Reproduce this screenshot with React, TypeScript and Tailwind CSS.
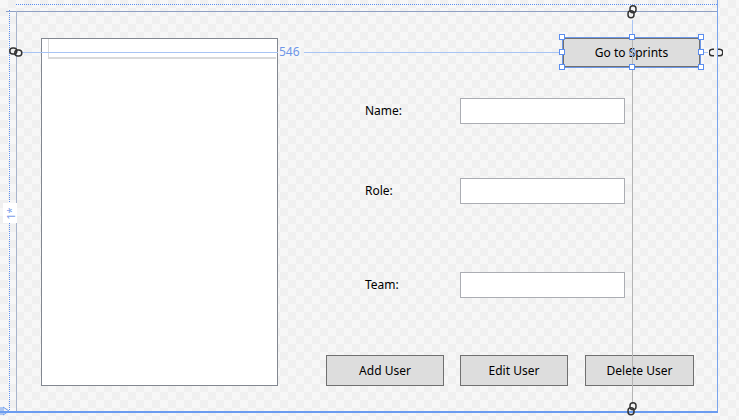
import React from "react";

const font = { fontFamily: '"Noto Sans", "Open Sans", sans-serif' };

const Handle = ({ x, y }: { x: number; y: number }) => (
  <div
    className="absolute h-[6px] w-[6px] border border-[#5b8ef0] bg-white"
    style={{ left: x - 3, top: y - 3 }}
  />
);

const Chain = ({ vertical }: { vertical?: boolean }) => (
  <svg width="14" height="10" viewBox="0 0 14 10" className={vertical ? "rotate-90" : ""}>
    <rect x="0.8" y="1" width="7" height="6" rx="3" fill="none" stroke="#333" strokeWidth="1.5" />
    <rect x="5.8" y="3" width="7" height="6" rx="3" fill="none" stroke="#333" strokeWidth="1.5" />
  </svg>
);

const Field = ({ label, className }: { label: string; className: string }) => (
  <div className={`ml-[87px] flex items-center ${className}`}>
    <span className="w-[95px] text-[12px] text-black">{label}</span>
    <div className="h-[26px] w-[165px] border border-[#abadb3] bg-white" />
  </div>
);

const Btn = ({ label, w }: { label: string; w: string }) => (
  <button
    className={`h-[31px] ${w} border border-[#707070] bg-[#dddddd] text-[12px] text-black`}
  >
    {label}
  </button>
);

export default function App() {
  return (
    <div
      className="relative h-[420px] w-[739px] overflow-hidden bg-[conic-gradient(#f0f0f0_25%,#f7f7f7_0_50%,#f0f0f0_0_75%,#f7f7f7_0)] bg-[length:16px_16px]"
      style={font}
    >
      {/* designer frame */}
      <div className="absolute left-[16px] top-[4px] w-[701px] border-t border-dotted border-[#5b8ef0]" />
      <div className="absolute left-[9px] top-[10px] h-[400px] border-l border-dotted border-[#5b8ef0]" />
      <div className="absolute left-[6px] top-[11px] w-[712px] border-t border-[#8fa0c4]" />
      <div className="absolute left-[16px] top-[11px] h-[400px] border-l border-[#a8b4cc]" />
      <div className="absolute left-[717px] top-0 h-[412px] border-l border-[#7aa4ec]" />
      <div className="absolute left-0 top-[411px] w-[718px] border-t-2 border-[#6a9cf0]" />

      {/* content */}
      <div className="flex pl-[41px] pt-[38px]">
        <div className="relative h-[348px] w-[237px] border border-[#828790] bg-white">
          <div className="absolute left-[6px] top-0 h-[20px] w-[228px] border-b-2 border-l border-[#dadada]" />
        </div>
        <div className="flex w-[422px] flex-col">
          <button className="h-[29px] w-[137px] self-end border border-[#707070] bg-[#dddddd] text-[12px] text-black">
            Go to Sprints
          </button>
          <Field label="Name:" className="mt-[31px]" />
          <Field label="Role:" className="mt-[54px]" />
          <Field label="Team:" className="mt-[68px]" />
          <div className="ml-[48px] mt-[57px] flex">
            <Btn label="Add User" w="w-[118px]" />
            <div className="ml-[16px]">
              <Btn label="Edit User" w="w-[108px]" />
            </div>
            <div className="ml-[17px]">
              <Btn label="Delete User" w="w-[109px]" />
            </div>
          </div>
        </div>
      </div>

      {/* guide lines */}
      <div className="absolute left-[22px] top-[52px] w-[256px] border-t border-[#a8c4f4]" />
      <div className="absolute left-[278px] top-[45px] bg-[#f7f7f7]/80 px-[1px] text-[12px] leading-[14px] text-[#6f96e8]">
        546
      </div>
      <div className="absolute left-[304px] top-[52px] w-[258px] border-t border-[#a8c4f4]" />
      <div className="absolute left-[700px] top-[52px] w-[8px] border-t border-[#a8c4f4]" />
      <div className="absolute left-[632px] top-[20px] h-[16px] border-l border-[#a8c4f4]" />
      <div className="absolute left-[632px] top-[38px] h-[366px] border-l border-[#b4b4b4]" />

      {/* selection adorners */}
      <div className="absolute left-[562px] top-[37px] h-[31px] w-[139px] border border-[#6d98e8]" />
      <div className="absolute left-[629px] top-[49px] h-[7px] w-[7px] rounded-full border border-[#6d98e8]" />
      <Handle x={562} y={37} />
      <Handle x={632} y={37} />
      <Handle x={701} y={37} />
      <Handle x={562} y={52} />
      <Handle x={701} y={52} />
      <Handle x={562} y={67} />
      <Handle x={632} y={67} />
      <Handle x={701} y={67} />

      {/* chain icons */}
      <div className="absolute left-[9px] top-[47px]">
        <Chain />
      </div>
      <div className="absolute left-[625px] top-[7px]">
        <Chain vertical />
      </div>
      <div className="absolute left-[625px] top-[404px]">
        <Chain vertical />
      </div>
      <svg className="absolute left-[709px] top-[48px]" width="14" height="9" viewBox="0 0 14 9">
        <path d="M5 1.2H3.5a3.3 3.3 0 0 0 0 6.6H5" fill="none" stroke="#333" strokeWidth="1.6" />
        <path d="M9 1.2h1.5a3.3 3.3 0 0 1 0 6.6H9" fill="none" stroke="#333" strokeWidth="1.6" />
      </svg>

      {/* row size label */}
      <div className="absolute left-[3px] top-[203px] flex h-[20px] w-[14px] items-center justify-center bg-white">
        <span className="-rotate-90 text-[11px] leading-none text-[#7d9ee8]">1*</span>
      </div>
      <svg className="absolute left-0 top-[406px]" width="10" height="10" viewBox="0 0 10 10">
        <path d="M1 1v8M3 1v8M3 1l6 4-6 4" fill="none" stroke="#6a9cf0" strokeWidth="1" />
      </svg>
    </div>
  );
}
